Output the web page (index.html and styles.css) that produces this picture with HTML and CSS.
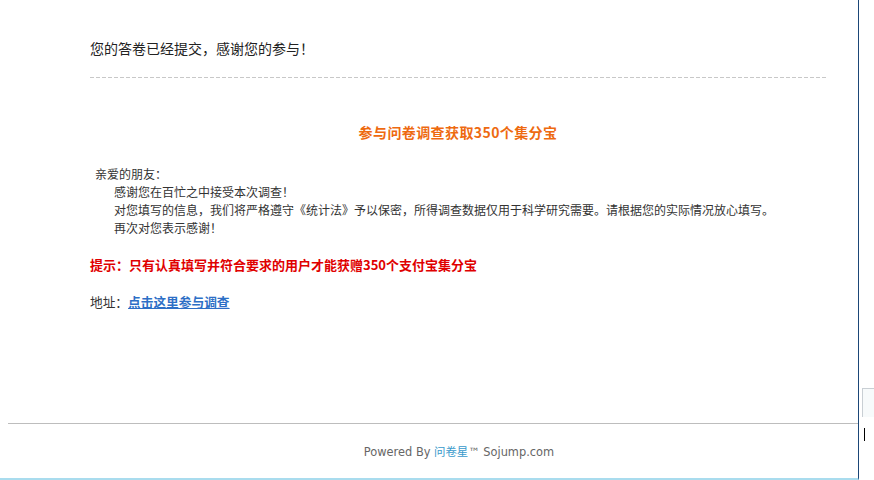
FILE: index.html
```html
<!DOCTYPE html>
<html lang="zh-CN">
<head>
<meta charset="utf-8">
<title>问卷星</title>
<link rel="stylesheet" href="styles.css">
</head>
<body>
<div class="frame">
  <div class="content">
    <div class="notice">您的答卷已经提交，感谢您的参与！</div>
    <div class="divider"></div>
    <h2 class="title">参与问卷调查获取350个集分宝</h2>
    <div class="letter">
      <p class="greet">亲爱的朋友：</p>
      <p class="indent">感谢您在百忙之中接受本次调查！</p>
      <p class="indent">对您填写的信息，我们将严格遵守《统计法》予以保密，所得调查数据仅用于科学研究需要。请根据您的实际情况放心填写。</p>
      <p class="indent">再次对您表示感谢！</p>
    </div>
    <p class="tip">提示：只有认真填写并符合要求的用户才能获赠350个支付宝集分宝</p>
    <p class="addr">地址：<a class="addr-link" href="#">点击这里参与调查</a></p>
  </div>
  <div class="footer">Powered By <a class="brand" href="#">问卷星</a>™ Sojump.com</div>
</div>
<div class="side">
  <div class="side-box"></div>
  <div class="caret"></div>
</div>
</body>
</html>
```
FILE: styles.css
```css
html, body {
  margin: 0;
  padding: 0;
  background: #fff;
}
body {
  display: flex;
  height: 480px;
  overflow: hidden;
  font-family: "Noto Sans CJK SC", "Noto Sans", sans-serif;
  color: #333;
}
.frame {
  width: 858px;
  height: 478px;
  border-right: 1px solid #1b4677;
  border-bottom: 2px solid #a9dcee;
  display: flex;
  flex-direction: column;
}
.content {
  flex: 1;
  padding: 0 32px 0 90px;
}
.notice {
  margin-top: 38px;
  font-size: 14px;
  line-height: 20px;
  color: #222;
}
.divider {
  margin-top: 19px;
  height: 1px;
  background: repeating-linear-gradient(to right, #c8c8c8 0 4px, transparent 4px 6px);
}
.title {
  margin: 44px 0 0;
  font-size: 14px;
  line-height: 20px;
  font-weight: bold;
  letter-spacing: 0.4px;
  color: #ee6a10;
  text-align: center;
}
.letter {
  margin-top: 23px;
  font-size: 12px;
  line-height: 18px;
  color: #333;
}
.letter p {
  margin: 0;
}
.greet {
  padding-left: 5px;
}
.indent {
  padding-left: 24px;
}
.tip {
  margin: 18px 0 0;
  font-size: 13px;
  line-height: 20px;
  font-weight: bold;
  color: #e00000;
}
.addr {
  margin: 17px 0 0;
  font-size: 12.7px;
  line-height: 20px;
  color: #333;
}
.addr-link {
  color: #2d6fc6;
  font-weight: bold;
  text-decoration: underline;
}
.footer {
  margin-left: 8px;
  padding-left: 52px;
  height: 54px;
  border-top: 1px solid #bdbdbd;
  line-height: 54px;
  text-align: center;
  font-family: "DejaVu Sans", "Noto Sans CJK SC", sans-serif;
  font-size: 11.4px;
  color: #666;
}
.brand {
  color: #3a9acb;
  text-decoration: none;
  font-family: "Noto Sans CJK SC", sans-serif;
}
.side {
  flex: 1;
  padding-top: 388px;
  display: flex;
  flex-direction: column;
}
.side-box {
  margin-left: 3px;
  height: 28px;
  border-top: 1px solid #c9cfd4;
  border-left: 1px solid #c9cfd4;
  background: #f7fafb;
}
.caret {
  margin: 11px 0 0 5px;
  width: 1px;
  height: 13px;
  background: #000;
}
```
